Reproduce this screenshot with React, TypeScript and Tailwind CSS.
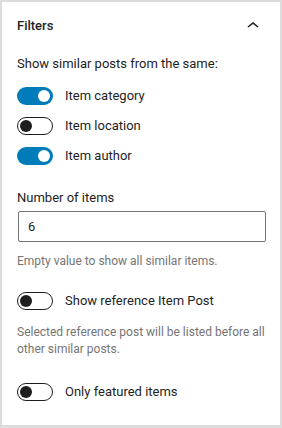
import React, { useState } from "react";

function Toggle({ on, onChange }: { on: boolean; onChange: () => void }) {
  return (
    <button
      type="button"
      onClick={onChange}
      className={
        on
          ? "relative w-[36px] h-[18px] rounded-full bg-[#007cba] shrink-0"
          : "relative w-[36px] h-[18px] rounded-full border border-[#1e1e1e] bg-white shrink-0"
      }
    >
      <span
        className={
          on
            ? "absolute top-[3px] left-[21px] w-[12px] h-[12px] rounded-full bg-white"
            : "absolute top-[2px] left-[2px] w-[12px] h-[12px] rounded-full bg-[#1e1e1e]"
        }
      />
    </button>
  );
}

function ToggleRow({ label, on, onChange, className = "" }: { label: string; on: boolean; onChange: () => void; className?: string }) {
  return (
    <div className={"flex items-center gap-3 h-[30px] " + className}>
      <Toggle on={on} onChange={onChange} />
      <span className="text-[13px] text-[#1e1e1e]">{label}</span>
    </div>
  );
}

export default function App() {
  const [opts, setOpts] = useState({
    category: true,
    location: false,
    author: true,
    reference: false,
    featured: false,
  });
  const [count, setCount] = useState("6");

  const flip = (k: keyof typeof opts) => setOpts((o) => ({ ...o, [k]: !o[k] }));

  return (
    <div
      className="w-[282px] h-[428px] bg-white border-2 border-b-[3px] border-[#dcdcdc] text-[#1e1e1e]"
      style={{ fontFamily: 'Roboto, "Noto Sans", sans-serif' }}
    >
      <div className="h-12 flex items-center justify-between pl-[15px] pr-[15px]">
        <span className="text-[13px] font-medium">Filters</span>
        <svg width="24" height="24" viewBox="0 0 24 24" className="fill-[#1e1e1e]">
          <path d="M6.5 12.4L12 8l5.5 4.4-.9 1.2L12 10l-4.6 3.6-.9-1.2z" />
        </svg>
      </div>

      <div className="px-[15px]">
        <p className="mt-1 text-[13px] leading-5">Show similar posts from the same:</p>

        <div className="mt-[7px]">
          <ToggleRow label="Item category" on={opts.category} onChange={() => flip("category")} />
          <ToggleRow label="Item location" on={opts.location} onChange={() => flip("location")} />
          <ToggleRow label="Item author" on={opts.author} onChange={() => flip("author")} />
        </div>

        <label className="block mt-[17px] text-[13px] leading-5">Number of items</label>
        <input
          value={count}
          onChange={(e) => setCount(e.target.value)}
          className="mt-[3px] ml-px w-[248px] h-[31px] px-[9px] border border-[#757575] rounded-[2px] text-[13px] outline-none"
        />
        <p className="mt-[11px] text-[12px] leading-4 text-[#757575]">Empty value to show all similar items.</p>

        <ToggleRow
          className="mt-[17px]"
          label="Show reference Item Post"
          on={opts.reference}
          onChange={() => flip("reference")}
        />
        <p className="mt-2 text-[12px] leading-[17px] text-[#757575]">
          Selected reference post will be listed before all other similar posts.
        </p>

        <ToggleRow
          className="mt-[19px]"
          label="Only featured items"
          on={opts.featured}
          onChange={() => flip("featured")}
        />
      </div>
    </div>
  );
}
